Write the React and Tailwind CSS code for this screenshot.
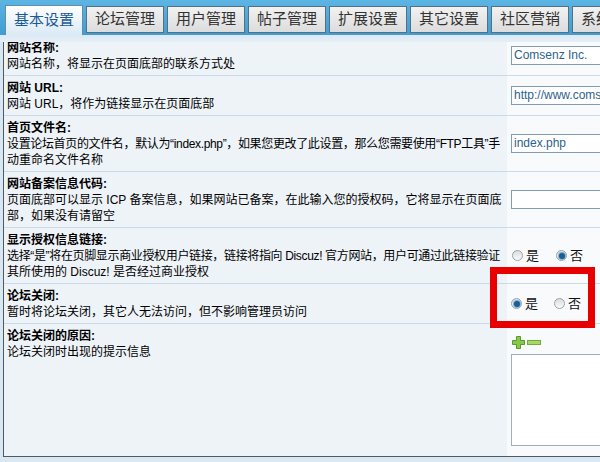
const tabs = ["基本设置", "论坛管理", "用户管理", "帖子管理", "扩展设置", "其它设置", "社区营销", "系统工具"];

function Radio({ checked, label }) {
  return (
    <span className="flex items-center gap-[3px]">
      <span className="w-[11px] h-[11px] rounded-full border border-[#98a3ab] bg-gradient-to-b from-[#dcdcdc] to-[#fbfbfb] flex items-center justify-center">
        {checked && <span className="w-[6px] h-[6px] rounded-full bg-[#1d5e91] ring-1 ring-[#7fb3d9]" />}
      </span>
      <span className="text-[13px] text-[#111]">{label}</span>
    </span>
  );
}

// lines: strings, or [text, true] for a line that needs tighter spacing
function Row({ title, lines, children }) {
  return (
    <div className="flex border-b border-[#c9dbea]">
      <div className="w-[503px] shrink-0 overflow-hidden bg-[#eef3f8] px-[3px] pt-[4px] pb-[3px] text-[12px] leading-[16px] text-black">
        <div className="font-bold whitespace-nowrap">{title}</div>
        {lines.map((l) =>
          Array.isArray(l) ? (
            <div key={l[0]} className="whitespace-nowrap tracking-[-0.35px]">{l[0]}</div>
          ) : (
            <div key={l} className="whitespace-nowrap">{l}</div>
          )
        )}
      </div>
      <div className="flex-1 bg-[#f8fafc] pl-[4px] flex items-center">{children}</div>
    </div>
  );
}

function TextInput({ value }) {
  return (
    <div className="w-[120px] h-[19px] shrink-0 border border-[#7f9db9] bg-white px-[2px] text-[12px] leading-[17px] text-[#2f5f8e] whitespace-nowrap overflow-hidden">
      {value}
    </div>
  );
}

export default function App() {
  return (
    <div
      className="w-[600px] h-[462px] overflow-hidden relative bg-[#d9e7f3]"
      style={{ fontFamily: '"Liberation Sans", "Noto Sans CJK SC", sans-serif' }}
    >
      <div className="h-[35px] bg-gradient-to-b from-[#5cb5e3] to-[#3f9dd3] flex items-end gap-[3px] pl-[5px] overflow-hidden">
        {tabs.map((t, i) =>
          i === 0 ? (
            <div
              key={t}
              className="w-[78px] h-[30px] shrink-0 border border-b-0 border-[#5f8fb0] bg-gradient-to-b from-[#ffffff] to-[#dbeaf6] text-[#1c5a96] text-[15px] flex items-center justify-center"
            >
              {t}
            </div>
          ) : (
            <div
              key={t}
              className="w-[78px] h-[27px] mb-[2px] shrink-0 border border-[#55707f] bg-gradient-to-b from-[#f2f2f2] to-[#dcdcdc] text-[#333] text-[15px] flex items-center justify-center"
            >
              {t}
            </div>
          )
        )}
      </div>
      <div className="h-[7px] bg-gradient-to-b from-[#dbe9f5] to-[#e6eff7]" />
      <div className="ml-[3px] h-[415px] border-l border-b border-[#4f5a62] overflow-hidden">
        <div className="-mt-[6px]">
          <Row title="网站名称:" lines={["网站名称，将显示在页面底部的联系方式处"]}>
            <TextInput value="Comsenz Inc." />
          </Row>
          <Row title="网站 URL:" lines={["网站 URL，将作为链接显示在页面底部"]}>
            <TextInput value="http://www.comsenz.com/" />
          </Row>
          <Row
            title="首页文件名:"
            lines={[
              ["设置论坛首页的文件名，默认为“index.php”，如果您更改了此设置，那么您需要使用“FTP工具”手", true],
              "动重命名文件名称",
            ]}
          >
            <TextInput value="index.php" />
          </Row>
          <Row
            title="网站备案信息代码:"
            lines={[
              "页面底部可以显示 ICP 备案信息，如果网站已备案，在此输入您的授权码，它将显示在页面底",
              "部，如果没有请留空",
            ]}
          >
            <TextInput value="" />
          </Row>
          <Row
            title="显示授权信息链接:"
            lines={[
              ["选择“是”将在页脚显示商业授权用户链接，链接将指向 Discuz! 官方网站，用户可通过此链接验证", true],
              "其所使用的 Discuz! 是否经过商业授权",
            ]}
          >
            <div className="flex items-center gap-[17px] pl-[1px]">
              <Radio label="是" />
              <Radio checked label="否" />
            </div>
          </Row>
          <Row title="论坛关闭:" lines={["暂时将论坛关闭，其它人无法访问，但不影响管理员访问"]}>
            <div className="flex items-center gap-[16px]">
              <Radio checked label="是" />
              <Radio label="否" />
            </div>
          </Row>
          <div className="flex h-[200px]">
            <div className="w-[503px] shrink-0 bg-[#eef3f8] px-[3px] pt-[4px] text-[12px] leading-[16px] text-black">
              <div className="font-bold">论坛关闭的原因:</div>
              <div>论坛关闭时出现的提示信息</div>
            </div>
            <div className="flex-1 bg-[#f8fafc] pl-[4px] pt-[12px] flex flex-col gap-[5px]">
              <div className="flex items-center gap-[2px] pl-[1px]">
                <svg width="13" height="13" viewBox="0 0 13 13">
                  <path
                    d="M4.5 0.5h4v4h4v4h-4v4h-4v-4h-4v-4h4z"
                    fill="#86c94a"
                    stroke="#5a9a2a"
                    strokeWidth="1"
                  />
                </svg>
                <svg width="14" height="13" viewBox="0 0 14 13">
                  <rect x="0.5" y="4.5" width="13" height="4" fill="#a6d86a" stroke="#6fae3a" strokeWidth="1" />
                </svg>
              </div>
              <div className="w-[120px] h-[92px] border border-[#9bb0c0] bg-white" />
            </div>
          </div>
        </div>
      </div>
      <div className="absolute left-[490px] top-[267px] w-[105px] h-[61px] border-[7px] border-[#e80000]" />
    </div>
  );
}
